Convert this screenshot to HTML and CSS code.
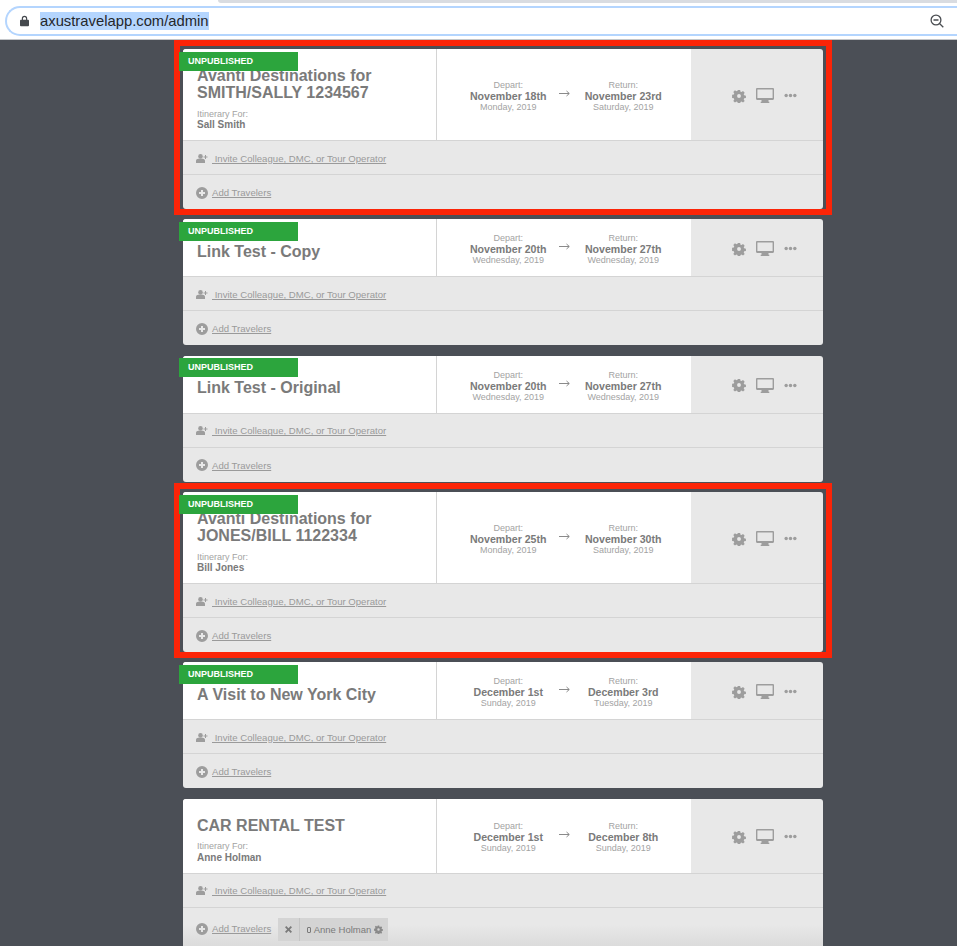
FILE: index.html
```html
<!DOCTYPE html>
<html lang="en">
<head>
<meta charset="utf-8">
<title>Admin</title>
<link rel="stylesheet" href="styles.css">
</head>
<body>
<svg class="sprites" width="0" height="0" aria-hidden="true">
  <symbol id="i-gear" viewBox="0 0 16 16"><path fill-rule="evenodd" d="M6.7 1h2.6l.4 2 1.2.5 1.7-1.1 1.9 1.9-1.1 1.7.5 1.2 2 .4v2.7l-2 .4-.5 1.2 1.1 1.7-1.9 1.9-1.7-1.1-1.2.5-.4 2H6.7l-.4-2-1.2-.5-1.7 1.1-1.900-1.900 1.100-1.700-.5-1.200-2-.4V6.600l2-.4.5-1.200-1.100-1.700 1.900-1.900 1.700 1.100 1.200-.5zM8 5.800a2.200 2.200 0 1 0 0 4.400 2.200 2.200 0 0 0 0-4.400z"/></symbol>
  <symbol id="i-screen" viewBox="0 0 18 15"><path fill-rule="evenodd" d="M1.200 0h15.600C17.500 0 18 .5 18 1.200v9.600c0 .7-.5 1.200-1.200 1.200H12.500v1.800h.8V15H4.700v-1.200h.8V12H1.200C.5 12 0 11.500 0 10.800V1.200C0 .5.500 0 1.200 0zM1.400 1.400V10h15.200V1.400z"/></symbol>
  <symbol id="i-dots" viewBox="0 0 12 4"><circle cx="2" cy="2" r="1.600"/><circle cx="6" cy="2" r="1.600"/><circle cx="10" cy="2" r="1.600"/></symbol>
  <symbol id="i-user" viewBox="0 0 12 9"><circle cx="4.500" cy="2.400" r="2.300"/><path d="M0 9V7c0-1.500 1.200-2.300 2.400-2.300h4.200C7.800 4.700 9 5.500 9 7v2z"/><path d="M9 1h1v1.500h1.500v1H10V5H9V3.500H7.500v-1H9z"/></symbol>
  <symbol id="i-plus" viewBox="0 0 12 12"><path fill-rule="evenodd" d="M6 0a6 6 0 1 1 0 12A6 6 0 0 1 6 0zM5 3v2H3v2h2v2h2V7h2V5H7V3z"/></symbol>
  <symbol id="i-x" viewBox="0 0 8 8"><path d="M1.500 0 4 2.500 6.500 0 8 1.500 5.500 4 8 6.500 6.500 8 4 5.500 1.500 8 0 6.500 2.500 4 0 1.500z"/></symbol>
  <symbol id="i-arrow" viewBox="0 0 11 7"><path d="M0 3.500h10M7.500 1l2.800 2.500L7.500 6" fill="none" stroke-width="1"/></symbol>
</svg>

<header class="browser-bar">
  <div class="url-field">
    <svg class="lock" viewBox="0 0 10 12" aria-hidden="true"><path fill-rule="evenodd" d="M2 5V3.500a3 3 0 0 1 6 0V5h1c.6 0 1 .4 1 1v5c0 .6-.4 1-1 1H1c-.6 0-1-.4-1-1V6c0-.6.4-1 1-1zm1.300 0h3.400V3.500a1.700 1.700 0 0 0-3.400 0z"/></svg>
    <span class="url">axustravelapp.com/admin</span>
    <svg class="zoom-out" viewBox="0 0 14 14" aria-hidden="true"><circle cx="6" cy="6" r="4.900" fill="none" stroke-width="1.300"/><path d="M3.500 6h5M9.500 9.500l3.800 3.800" fill="none" stroke-width="1.300"/></svg>
  </div>
</header>

<main class="list">

  <article class="card card-tall flagged">
    <div class="ribbon">UNPUBLISHED</div>
    <div class="card-top">
      <div class="summary">
        <h2 class="title">Avanti Destinations for<br>SMITH/SALLY 1234567</h2>
        <p class="for-label">Itinerary For:</p>
        <p class="for-name">Sall Smith</p>
      </div>
      <div class="dates">
        <div class="date"><span class="date-label">Depart:</span><strong>November 18th</strong><span class="date-sub">Monday, 2019</span></div>
        <svg class="arrow"><use href="#i-arrow"/></svg>
        <div class="date"><span class="date-label">Return:</span><strong>November 23rd</strong><span class="date-sub">Saturday, 2019</span></div>
      </div>
      <div class="actions">
        <svg class="a-gear"><use href="#i-gear"/></svg><svg class="a-screen"><use href="#i-screen"/></svg><svg class="a-dots"><use href="#i-dots"/></svg>
      </div>
    </div>
    <div class="row"><svg class="r-user"><use href="#i-user"/></svg><a class="row-link" href="#">&nbsp;Invite Colleague, DMC, or Tour Operator</a></div>
    <div class="row"><svg class="r-plus"><use href="#i-plus"/></svg><a class="row-link" href="#">Add Travelers</a></div>
  </article>

  <article class="card">
    <div class="ribbon">UNPUBLISHED</div>
    <div class="card-top">
      <div class="summary"><h2 class="title">Link Test - Copy</h2></div>
      <div class="dates">
        <div class="date"><span class="date-label">Depart:</span><strong>November 20th</strong><span class="date-sub">Wednesday, 2019</span></div>
        <svg class="arrow"><use href="#i-arrow"/></svg>
        <div class="date"><span class="date-label">Return:</span><strong>November 27th</strong><span class="date-sub">Wednesday, 2019</span></div>
      </div>
      <div class="actions">
        <svg class="a-gear"><use href="#i-gear"/></svg><svg class="a-screen"><use href="#i-screen"/></svg><svg class="a-dots"><use href="#i-dots"/></svg>
      </div>
    </div>
    <div class="row"><svg class="r-user"><use href="#i-user"/></svg><a class="row-link" href="#">&nbsp;Invite Colleague, DMC, or Tour Operator</a></div>
    <div class="row"><svg class="r-plus"><use href="#i-plus"/></svg><a class="row-link" href="#">Add Travelers</a></div>
  </article>

  <article class="card">
    <div class="ribbon">UNPUBLISHED</div>
    <div class="card-top">
      <div class="summary"><h2 class="title">Link Test - Original</h2></div>
      <div class="dates">
        <div class="date"><span class="date-label">Depart:</span><strong>November 20th</strong><span class="date-sub">Wednesday, 2019</span></div>
        <svg class="arrow"><use href="#i-arrow"/></svg>
        <div class="date"><span class="date-label">Return:</span><strong>November 27th</strong><span class="date-sub">Wednesday, 2019</span></div>
      </div>
      <div class="actions">
        <svg class="a-gear"><use href="#i-gear"/></svg><svg class="a-screen"><use href="#i-screen"/></svg><svg class="a-dots"><use href="#i-dots"/></svg>
      </div>
    </div>
    <div class="row"><svg class="r-user"><use href="#i-user"/></svg><a class="row-link" href="#">&nbsp;Invite Colleague, DMC, or Tour Operator</a></div>
    <div class="row"><svg class="r-plus"><use href="#i-plus"/></svg><a class="row-link" href="#">Add Travelers</a></div>
  </article>

  <article class="card card-tall flagged">
    <div class="ribbon">UNPUBLISHED</div>
    <div class="card-top">
      <div class="summary">
        <h2 class="title">Avanti Destinations for<br>JONES/BILL 1122334</h2>
        <p class="for-label">Itinerary For:</p>
        <p class="for-name">Bill Jones</p>
      </div>
      <div class="dates">
        <div class="date"><span class="date-label">Depart:</span><strong>November 25th</strong><span class="date-sub">Monday, 2019</span></div>
        <svg class="arrow"><use href="#i-arrow"/></svg>
        <div class="date"><span class="date-label">Return:</span><strong>November 30th</strong><span class="date-sub">Saturday, 2019</span></div>
      </div>
      <div class="actions">
        <svg class="a-gear"><use href="#i-gear"/></svg><svg class="a-screen"><use href="#i-screen"/></svg><svg class="a-dots"><use href="#i-dots"/></svg>
      </div>
    </div>
    <div class="row"><svg class="r-user"><use href="#i-user"/></svg><a class="row-link" href="#">&nbsp;Invite Colleague, DMC, or Tour Operator</a></div>
    <div class="row"><svg class="r-plus"><use href="#i-plus"/></svg><a class="row-link" href="#">Add Travelers</a></div>
  </article>

  <article class="card">
    <div class="ribbon">UNPUBLISHED</div>
    <div class="card-top">
      <div class="summary"><h2 class="title">A Visit to New York City</h2></div>
      <div class="dates">
        <div class="date"><span class="date-label">Depart:</span><strong>December 1st</strong><span class="date-sub">Sunday, 2019</span></div>
        <svg class="arrow"><use href="#i-arrow"/></svg>
        <div class="date"><span class="date-label">Return:</span><strong>December 3rd</strong><span class="date-sub">Tuesday, 2019</span></div>
      </div>
      <div class="actions">
        <svg class="a-gear"><use href="#i-gear"/></svg><svg class="a-screen"><use href="#i-screen"/></svg><svg class="a-dots"><use href="#i-dots"/></svg>
      </div>
    </div>
    <div class="row"><svg class="r-user"><use href="#i-user"/></svg><a class="row-link" href="#">&nbsp;Invite Colleague, DMC, or Tour Operator</a></div>
    <div class="row"><svg class="r-plus"><use href="#i-plus"/></svg><a class="row-link" href="#">Add Travelers</a></div>
  </article>

  <article class="card card-last">
    <div class="card-top card-top-mid">
      <div class="summary">
        <h2 class="title">CAR RENTAL TEST</h2>
        <p class="for-label">Itinerary For:</p>
        <p class="for-name">Anne Holman</p>
      </div>
      <div class="dates">
        <div class="date"><span class="date-label">Depart:</span><strong>December 1st</strong><span class="date-sub">Sunday, 2019</span></div>
        <svg class="arrow"><use href="#i-arrow"/></svg>
        <div class="date"><span class="date-label">Return:</span><strong>December 8th</strong><span class="date-sub">Sunday, 2019</span></div>
      </div>
      <div class="actions">
        <svg class="a-gear"><use href="#i-gear"/></svg><svg class="a-screen"><use href="#i-screen"/></svg><svg class="a-dots"><use href="#i-dots"/></svg>
      </div>
    </div>
    <div class="row"><svg class="r-user"><use href="#i-user"/></svg><a class="row-link" href="#">&nbsp;Invite Colleague, DMC, or Tour Operator</a></div>
    <div class="row row-chips"><svg class="r-plus"><use href="#i-plus"/></svg><a class="row-link" href="#">Add Travelers</a>
      <div class="chip">
        <span class="chip-x"><svg class="c-x"><use href="#i-x"/></svg></span>
        <span class="chip-name"><span class="phone"></span>Anne Holman<svg class="c-gear"><use href="#i-gear"/></svg></span>
      </div>
    </div>
  </article>

</main>
</body>
</html>
```

FILE: styles.css
```css
* { box-sizing: border-box; }
html, body { margin: 0; height: 946px; overflow: hidden; }
body { background: #4b4f56; font-family: "Liberation Sans", Arial, sans-serif; color: #7a7a7a; }
.sprites { position: absolute; }

.browser-bar { position: relative; height: 40px; background: #fff; border-bottom: 1px solid #c4c6c9; padding: 6px 0 0 5px; }
.browser-bar::before { content: ""; position: absolute; top: 0; left: 218px; right: 0; height: 3px; background: #d9dce1; border-radius: 0 0 0 4px; }
.url-field { height: 30px; border: 2px solid #b4d5fe; border-right: 0; border-radius: 15px 0 0 15px; display: flex; align-items: center; padding: 0 13px; background: #fff; }
.lock { width: 9px; height: 11.500px; fill: #45494e; flex: none; }
.url { margin-left: 11px; font-size: 14.800px; color: #24272b; background: #b4d5fe; line-height: 18px; }
.zoom-out { width: 14px; height: 14px; margin-left: auto; stroke: #4a4d51; flex: none; }

.list { width: 640px; margin: 9px 0 0 183px; }
.card { position: relative; height: 126px; margin-bottom: 10.500px; background: #e8e8e8; border-radius: 3px; }
.card-tall { height: 159.500px; }
.card-last { height: auto; margin-bottom: 0; }
.flagged::after { content: ""; position: absolute; inset: -9px -9px -6px -9px; border: 6px solid #fb2407; pointer-events: none; }

.ribbon { position: absolute; z-index: 1; left: -4px; top: 2.900px; width: 119px; height: 19px; padding-left: 9px; background: #2ca53d; color: #fff; font-size: 9px; font-weight: 700; line-height: 18px; }

.card-top { display: flex; height: 57px; }
.card-tall .card-top { height: 91px; }
.card-top-mid { height: 74px; }

.summary { width: 254px; padding: 23.900px 14px 0; background: #fff; border-right: 1px solid #d4d4d4; border-radius: 3px 0 0 0; }
.card-tall .summary { padding-top: 17.900px; }
.card-top-mid .summary { padding-top: 18.500px; }
.title { margin: 0; font-size: 16px; line-height: 17px; font-weight: 700; color: #7a7a7a; }
.for-label { margin: 8px 0 0; font-size: 9px; line-height: 11px; color: #a3a3a3; }
.card-top-mid .for-label { margin-top: 7.400px; }
.for-name { margin: -0.500px 0 0; font-size: 10px; line-height: 11px; font-weight: 700; color: #7a7a7a; }

.dates { width: 254px; padding-left: 3.500px; display: flex; justify-content: center; align-items: center; background: #fff; }
.date { width: 104px; padding-top: 4px; display: flex; flex-direction: column; align-items: center; font-size: 9px; line-height: 11px; color: #a3a3a3; }
.date strong { font-size: 10.600px; color: #7a7a7a; }
.arrow { width: 11px; height: 7px; margin: -2px 1px 0 -1px; stroke: #8a8a8a; flex: none; }

.actions { flex: 1; display: flex; align-items: center; padding: 2px 0 0 41px; }
.actions svg { fill: #9d9d9d; }
.a-gear { width: 14px; height: 14px; }
.a-screen { width: 18px; height: 15px; margin-left: 10px; }
.a-dots { width: 13px; height: 5px; margin-left: 10px; }

.row { height: 34.250px; display: flex; align-items: center; padding: 1.700px 0 0 13px; border-top: 1px solid #d4d4d4; }
.row svg { fill: #9d9d9d; flex: none; }
.r-user { width: 12px; height: 9px; margin-right: 4px; }
.r-plus { width: 12px; height: 12px; margin-right: 4px; }
.row-link { font-size: 9.600px; color: #9a9a9a; text-decoration: underline; }

.row-chips { height: 43px; padding-top: 2px; background: linear-gradient(#e8e8e8 40%, #dcdcdc 88%); }
.row-chips .r-plus { margin-bottom: 1px; }
.row-chips .row-link { margin-bottom: 2px; }
.chip { display: flex; height: 23px; margin-left: 7px; background: #d4d4d4; font-size: 9.500px; color: #7a7a7a; align-items: center; }
.chip-x { width: 22px; height: 100%; display: flex; align-items: center; justify-content: center; border-right: 1px solid #c4c4c4; }
.chip-name { display: flex; align-items: center; padding: 0 5px 0 7px; }
.phone { width: 3.500px; height: 6px; margin-right: 3px; border: 1px solid #7a7a7a; border-radius: 1px; }
.row .c-x { width: 7px; height: 7px; fill: #7a7a7a; }
.row .c-gear { width: 9px; height: 9px; margin-left: 3px; fill: #8a8a8a; }
```
